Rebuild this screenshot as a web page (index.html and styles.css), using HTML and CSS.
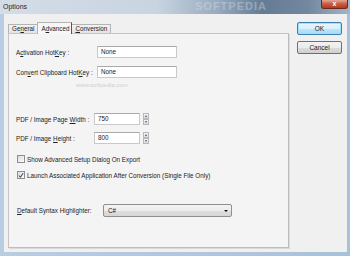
FILE: index.html
```html
<!DOCTYPE html>
<html>
<head>
<meta charset="utf-8">
<link rel="stylesheet" href="styles.css">
</head>
<body>
<div class="window">
  <div class="titlebar">
    <span class="title">Options</span>
    <span class="brand">SOFTPEDIA</span>
    <span class="close">x</span>
  </div>
  <div class="client">
    <div class="tabctl">
      <div class="tabstrip">
        <div class="tab">Ge<u>n</u>eral</div>
        <div class="tab active">A<u>d</u>vanced</div>
        <div class="tab"><u>C</u>onversion</div>
      </div>
      <div class="pane">
        <div class="row r1">
          <span class="lbl w81">A<u>c</u>tivation Hot<u>K</u>ey :</span>
          <span class="input w80">None</span>
        </div>
        <div class="row r2">
          <span class="lbl w81">Con<u>v</u>ert Clipboard Hot<u>K</u>ey :</span>
          <span class="input w80">None</span>
        </div>
        <div class="wm">www.softpedia.com</div>
        <div class="row r3">
          <span class="lbl w78">PDF / Image Page <u>W</u>idth :</span>
          <span class="input w46">750</span>
          <span class="spin"><i class="up"></i><i class="dn"></i></span>
        </div>
        <div class="row r4">
          <span class="lbl w78">PDF / Image <u>H</u>eight :</span>
          <span class="input w46">800</span>
          <span class="spin"><i class="up"></i><i class="dn"></i></span>
        </div>
        <div class="row c1">
          <span class="cb"></span>
          <span class="cbl">Show Advanced Setup Dialog On Export</span>
        </div>
        <div class="row c2">
          <span class="cb checked">
            <svg width="7" height="7" viewBox="0 0 7 7"><path d="M1 3.5 L2.8 5.5 L6 0.8" fill="none" stroke="#3a4a6a" stroke-width="1.2"/></svg>
          </span>
          <span class="cbl">Launch Associated Application After Conversion (Single File Only)</span>
        </div>
        <div class="row r5">
          <span class="lbl w86"><u>D</u>efault Syntax Highlighter:</span>
          <span class="combo">C#<span class="arrow"></span></span>
        </div>
      </div>
    </div>
    <div class="buttons">
      <div class="btn ok">OK</div>
      <div class="btn">Cancel</div>
    </div>
  </div>
</div>
</body>
</html>
```

FILE: styles.css
```css
* { box-sizing: border-box; }
html, body { margin: 0; padding: 0; }
body {
  width: 350px;
  height: 256px;
  overflow: hidden;
  font-family: "Liberation Sans", Arial, sans-serif;
  font-size: 6.3px;
  color: #222;
}
u { text-decoration: underline; text-underline-offset: 1px; }
.window {
  width: 350px;
  height: 256px;
  display: flex;
  flex-direction: column;
  background: linear-gradient(90deg, #b9cde2 0%, #a8c1da 100%);
}
.titlebar {
  height: 14px;
  display: flex;
  align-items: flex-start;
  background: linear-gradient(90deg, #d3dde8 0%, #c8d4e0 45%, #98abbf 62%, #647b94 75%, #72889f 88%, #a2b5c9 100%);
}
.title {
  font-size: 7px;
  padding: 3px 0 0 3px;
  color: #1e2630;
  width: 195px;
}
.brand {
  font-size: 11px;
  font-weight: bold;
  letter-spacing: 1px;
  color: rgba(215, 226, 238, 0.4);
  line-height: 12px;
  height: 12px;
  white-space: nowrap;
}
.close {
  width: 27px;
  height: 9px;
  margin-left: auto;
  margin-right: 2px;
  background: linear-gradient(#e4a795 0%, #c9593f 50%, #b33a22 100%);
  border: 1px solid #6b2a1c;
  border-top: none;
  border-radius: 0 0 3px 3px;
  color: #fff;
  font-weight: bold;
  font-size: 7px;
  line-height: 7px;
  text-align: center;
}
.client {
  flex: 1;
  margin: 0 3px 4px 4px;
  background: #f0f0f0;
  display: flex;
  padding: 8px 0 0 4px;
}
.tabctl {
  width: 281px;
  display: flex;
  flex-direction: column;
}
.tabstrip {
  height: 11px;
  display: flex;
  align-items: flex-end;
}
.tab {
  height: 9px;
  padding: 0 3px;
  line-height: 8px;
  border: 1px solid #b4b4b4;
  border-bottom: none;
  background: linear-gradient(#f2f2f2, #e4e4e4);
  margin-right: -1px;
}
.tab.active {
  height: 12px;
  line-height: 11px;
  background: #f7f7f7;
  position: relative;
  z-index: 1;
  margin-bottom: -1px;
  border-right: 1px solid #555;
  padding: 0 2px 0 3px;
}
.pane {
  height: 215px;
  border: 1px solid #c4c4c4;
  border-right-color: #bdbdbd;
  border-bottom-color: #bdbdbd;
  box-shadow: 1px 1px 0 #dadada;
  background: #f4f4f4;
  padding-left: 7px;
  display: flex;
  flex-direction: column;
}
.row {
  display: flex;
  align-items: center;
  height: 12px;
}
.r1 { margin-top: 12px; }
.r2 { margin-top: 8px; }
.r3 { margin-top: 23px; }
.r4 { margin-top: 7px; }
.c1 { margin-top: 11px; height: 8px; }
.c2 { margin-top: 8px; height: 8px; }
.r5 { margin-top: 25px; height: 13px; }
.wm {
  margin-top: 2px;
  height: 10px;
  line-height: 10px;
  padding-left: 60px;
  color: #cfcfcf;
  font-size: 6px;
}
.lbl { flex: none; }
.w81 { width: 81px; }
.w78 { width: 78px; }
.w86 { width: 87px; padding-left: 1px; }
.input {
  height: 12px;
  background: #fff;
  border: 1px solid #c9c9c9;
  border-top-color: #a9a9a9;
  padding-left: 3px;
  line-height: 10px;
}
.w80 { width: 80px; }
.w46 { width: 46px; }
.spin {
  margin-left: 3px;
  width: 6px;
  height: 12px;
  display: flex;
  flex-direction: column;
}
.spin i {
  flex: 1;
  border: 1px solid #b8b8b8;
  background: linear-gradient(#f6f6f6, #dcdcdc);
  position: relative;
}
.spin i::after {
  content: "";
  position: absolute;
  left: 1px;
  top: 1px;
  border-left: 1px solid transparent;
  border-right: 1px solid transparent;
}
.spin .up::after { border-bottom: 2px solid #3a5a8a; }
.spin .dn::after { border-top: 2px solid #3a5a8a; }
.cb {
  width: 8px;
  height: 8px;
  margin-left: 1px;
  border: 1px solid #8f8f8f;
  background: linear-gradient(135deg, #dcdcdc, #fbfbfb);
  display: flex;
  align-items: center;
  justify-content: center;
}
.cb svg { display: block; }
.cbl { margin-left: 2px; }
.combo {
  width: 129px;
  height: 13px;
  border: 1px solid #8e8f8f;
  border-radius: 2px;
  background: linear-gradient(#f4f4f4 0%, #ececec 50%, #dedede 51%, #d6d6d6 100%);
  padding-left: 4px;
  line-height: 11px;
  display: flex;
  align-items: center;
  justify-content: space-between;
}
.arrow {
  width: 0;
  height: 0;
  margin-right: 3px;
  border-left: 2px solid transparent;
  border-right: 2px solid transparent;
  border-top: 2px solid #111;
}
.buttons {
  margin-left: 8px;
  display: flex;
  flex-direction: column;
  gap: 6px;
}
.btn {
  width: 45px;
  height: 13px;
  border: 1px solid #707070;
  border-radius: 2px;
  background: linear-gradient(#f2f2f2 0%, #ebebeb 50%, #dddddd 51%, #cfcfcf 100%);
  text-align: center;
  line-height: 11px;
  font-size: 6.5px;
}
.btn.ok {
  border-color: #3c7fb1;
  background: linear-gradient(#eaf6fd 0%, #d9f0fc 50%, #bee6fd 51%, #a7d9f5 100%);
  box-shadow: inset 0 0 0 1px #9fe0fb;
}
```
